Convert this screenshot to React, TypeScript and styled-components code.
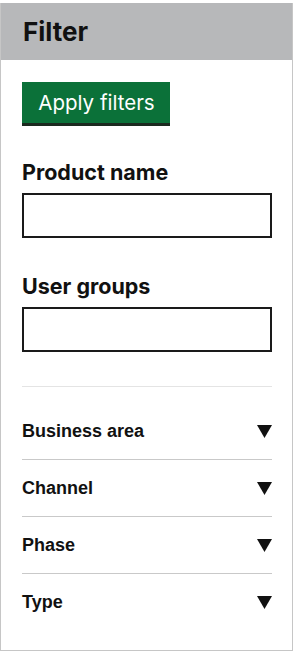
import React from "react"
import styled, { createGlobalStyle } from "styled-components"

const GlobalStyle = createGlobalStyle`
    html, body {
        margin: 0;
        padding: 0;
        background: #ffffff;
    }
    body {
        font-family: Inter, "Noto Sans", sans-serif;
        color: #111111;
    }
    * {
        box-sizing: border-box;
    }
`

const filterGroups = ["Business area", "Channel", "Phase", "Type"]

const Caret = () => (
    <svg width="15" height="13" viewBox="0 0 15 13" aria-hidden="true">
        <polygon points="0,0 15,0 7.5,13" fill="#111111" />
    </svg>
)

export default function App() {
    return (
        <>
            <GlobalStyle />
            <Panel>
                <Header>
                    <Title>Filter</Title>
                </Header>
                <Body>
                    <ApplyButton type="button">Apply filters</ApplyButton>

                    <FieldLabel htmlFor="product-name">Product name</FieldLabel>
                    <TextInput id="product-name" />

                    <FieldLabel htmlFor="user-groups" $spaced>User groups</FieldLabel>
                    <TextInput id="user-groups" />

                    <Divider />

                    <GroupList>
                        {filterGroups.map((name) => (
                            <GroupRow key={name}>
                                <GroupName>{name}</GroupName>
                                <Caret />
                            </GroupRow>
                        ))}
                    </GroupList>
                </Body>
            </Panel>
        </>
    )
}

const Panel = styled.div`
    display: flex;
    flex-direction: column;

    width: 293px;
    margin-top: 3px;

    border: 1px solid #c6c6c6;
    border-top: none;
    background-color: #ffffff;
`

const Header = styled.div`
    display: flex;
    align-items: center;

    height: 57px;
    padding: 0 22px;

    background-color: #b7b8ba;
`

const Title = styled.h1`
    margin: 0;

    font-size: 26px;
    font-weight: 700;
    color: #111111;
`

const Body = styled.div`
    display: flex;
    flex-direction: column;

    padding: 22px 20px 20px 21px;
`

const ApplyButton = styled.button`
    align-self: flex-start;

    height: 44px;
    width: 148px;
    padding: 0 0 0 1px;

    border: none;
    border-bottom: 3px solid #1b2a1f;
    background-color: #0b7139;

    font-family: Inter, "Noto Sans", sans-serif;
    font-size: 20.5px;
    color: #ffffff;
`

const FieldLabel = styled.label<{ $spaced?: boolean }>`
    margin-top: ${(p) => (p.$spaced ? "35px" : "33px")};
    margin-bottom: 8px;

    font-size: 21.5px;
    font-weight: 700;
    line-height: 26px;
`

const TextInput = styled.input`
    height: 45px;
    width: 250px;

    border: 2px solid #1a1a1a;
    border-radius: 0;
    background: #ffffff;
`

const Divider = styled.hr`
    width: 250px;
    margin: 34px 0 0;

    border: none;
    border-top: 1px solid #e4e4e4;
`

const GroupList = styled.div`
    display: flex;
    flex-direction: column;

    width: 250px;
    margin-top: 16px;
`

const GroupRow = styled.div`
    display: flex;
    align-items: center;
    justify-content: space-between;

    height: 57px;

    border-bottom: 1px solid #c9c9c9;

    &:last-child {
        border-bottom: none;
        height: 56px;
    }
`

const GroupName = styled.span`
    font-family: "Liberation Sans", Arial, sans-serif;
    font-size: 18px;
    font-weight: 700;
    color: #111111;
`
